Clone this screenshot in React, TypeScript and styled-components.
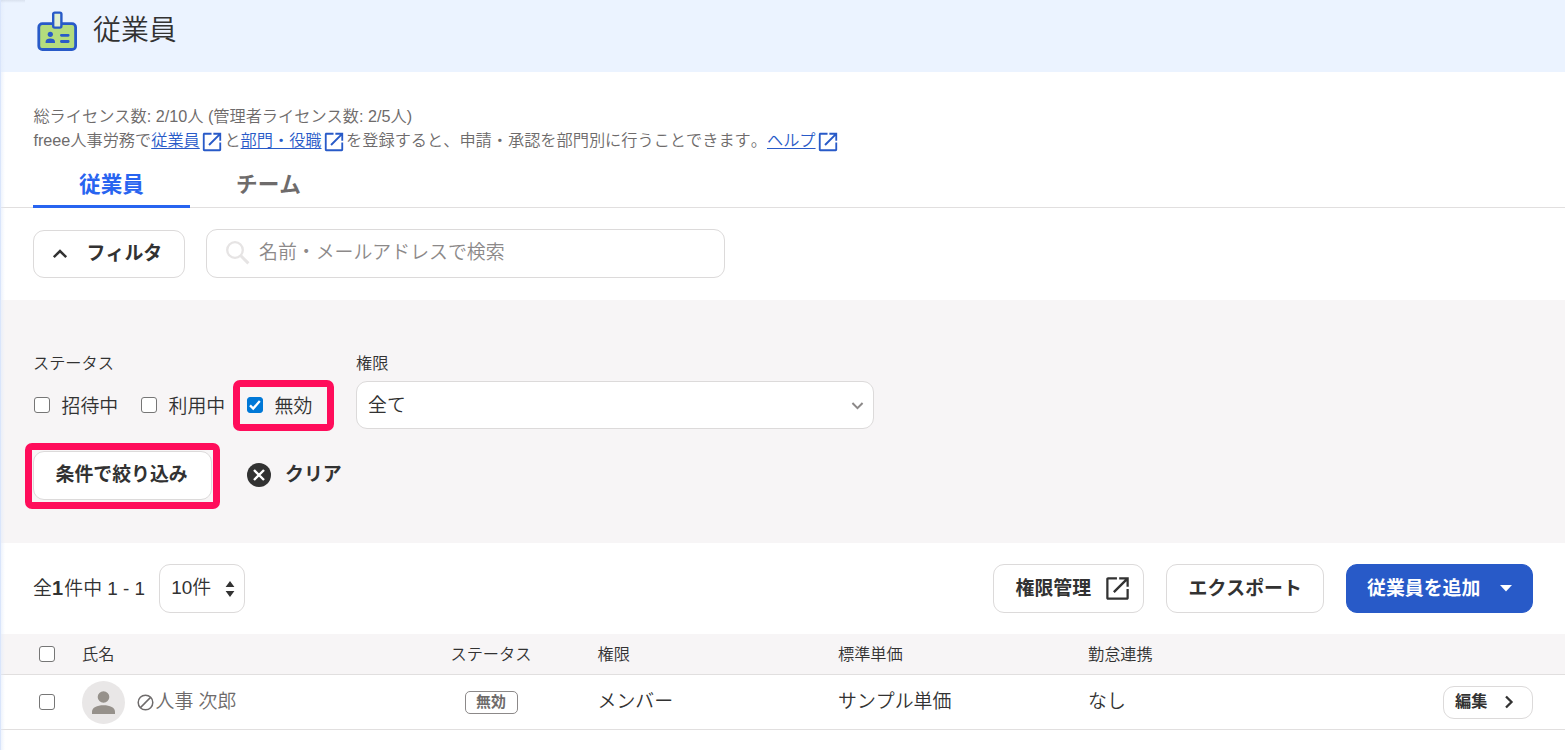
import React from "react";
import styled, { createGlobalStyle, css } from "styled-components";

const ink = "#323232";
const muted = "#6e6b6b";
const line = "#e1dfdf";
const blue = "#285ac8";

const GlobalStyle = createGlobalStyle`
  *, *::before, *::after { box-sizing: border-box; }
  body {
    margin: 0;
    background: #fff;
    color: ${ink};
    font-family: "Liberation Sans", "Noto Sans CJK JP", sans-serif;
    font-size: 18.9px;
    font-weight: 350;
    font-kerning: none;
    overflow: hidden;
  }
  button, input { font: inherit; color: inherit; }
`;

const Page = styled.main`
  position: relative;
  width: 1566px;
  height: 750px;
  padding-right: 1px;
  overflow: hidden;
  white-space: nowrap;
`;

const EdgeShade = styled.div`
  position: absolute;
  inset: 0 auto 0 0;
  width: 5px;
  background: linear-gradient(90deg, #d9e5fb 0 1px, rgba(225, 234, 250, 0.55) 1px, rgba(255, 255, 255, 0));
`;

const CornerShade = styled.div`
  position: absolute;
  left: 1px;
  top: 0;
  width: 24px;
  height: 3px;
  background: linear-gradient(180deg, rgba(90, 100, 120, 0.12), rgba(90, 100, 120, 0));
`;

const Header = styled.header`
  display: flex;
  align-items: center;
  gap: 15px;
  height: 72px;
  padding: 0 0 10px 36px;
  background: #ebf3ff;
`;

const Title = styled.h1`
  margin: 0;
  font-size: 27.9px;
  line-height: 40px;
  font-weight: 350;
`;

const Info = styled.section`
  padding: 32px 33.4px 0;
  height: 89px;
  font-size: 16.2px;
  line-height: 24.3px;
  color: ${muted};
`;

const InfoLine = styled.div`
  display: flex;
  align-items: center;
  height: 24.3px;
`;

const Link = styled.a`
  display: inline-flex;
  align-items: center;
  color: ${blue};
  margin-right: 1.6px;
  span { text-decoration: underline; text-underline-offset: 2px; text-decoration-thickness: 1px; }
  svg { margin: 3px 0 0 1px; }
`;

const Tabs = styled.nav`
  display: flex;
  height: 47px;
  padding-left: 33px;
  border-bottom: 1px solid ${line};
`;

const Tab = styled.div<{ $active?: boolean }>`
  width: 157px;
  height: 47px;
  line-height: 47px;
  text-align: center;
  font-size: 21.6px;
  font-weight: 700;
  color: ${(p) => (p.$active ? "#2864f0" : muted)};
  border-bottom: ${(p) => (p.$active ? "3px solid #2864f0" : "0")};
`;

const SearchRow = styled.div`
  display: flex;
  gap: 21px;
  height: 92px;
  padding: 21px 33px 0;
`;

const Button = styled.button<{ $w: number; $primary?: boolean; $small?: boolean }>`
  display: flex;
  align-items: center;
  width: ${(p) => p.$w}px;
  height: 49px;
  padding: 0 0 0 21.5px;
  border: 1px solid #dcdada;
  border-radius: 11px;
  background: #fff;
  font-weight: 700;
  line-height: 28px;
  ${(p) => p.$primary && css`background: ${blue}; border-color: ${blue}; color: #fff; padding-left: 20px;`}
  ${(p) => p.$small && css`height: 33px; font-size: 16.2px; padding-left: 11px;`}
`;

const Caption = styled.span<{ $gap?: number; $lift?: number }>`
  margin-left: ${(p) => p.$gap ?? 0}px;
  padding-bottom: ${(p) => p.$lift ?? 0}px;
`;

const Glyph = styled.span<{ $gap: number }>`
  display: flex;
  margin-left: ${(p) => p.$gap}px;
`;

const FilterButton = styled(Button)`
  height: 48px;
  margin-top: 1px;
  padding-left: 18px;
`;

const Field = styled.div<{ $w: number; $h?: number }>`
  display: flex;
  align-items: center;
  width: ${(p) => p.$w}px;
  height: ${(p) => p.$h ?? 49}px;
  border: 1px solid #dcdada;
  border-radius: 11px;
  background: #fff;
`;

const SearchField = styled(Field)`
  padding: 0 0 1px 19px;
  color: #8c8989;
`;

const SelectField = styled(Field)`
  justify-content: space-between;
  padding: 0 8px 0 11px;
`;

const FilterPanel = styled.section`
  height: 243px;
  padding: 51px 33px 0;
  background: #f7f5f6;
`;

const FilterFields = styled.div`
  display: flex;
  height: 100px;
`;

const Group = styled.div<{ $w: number }>`
  width: ${(p) => p.$w}px;
`;

const Label = styled.div`
  height: 30px;
  font-size: 16.2px;
  line-height: 24px;
`;

const Options = styled.div`
  display: flex;
  height: 48px;
  align-items: center;
`;

const Option = styled.label<{ $w: number }>`
  position: relative;
  display: flex;
  align-items: center;
  gap: 11.5px;
  width: ${(p) => p.$w}px;
  height: 32px;
  span { padding-top: 4px; line-height: 28px; }
`;

const Box = styled.input.attrs({ type: "checkbox", readOnly: true })`
  appearance: none;
  flex: none;
  width: 16px;
  height: 16px;
  margin: 0 0 0 1px;
  border: 1.4px solid #767676;
  border-radius: 3px;
  background: #fff;
  &:checked { background: #0078d7; border-color: #0078d7; }
`;

const Tick = styled.svg`
  position: absolute;
  left: 1px;
  top: 8px;
`;

const Highlight = styled.div<{ $inset: string }>`
  position: absolute;
  inset: ${(p) => p.$inset};
  border: 7px solid #ff0d5b;
  border-radius: 7px;
  pointer-events: none;
`;

const Actions = styled.div`
  display: flex;
  align-items: center;
  gap: 35px;
`;

const Marked = styled.div`
  position: relative;
`;

const ClearButton = styled.button`
  display: flex;
  align-items: center;
  gap: 14px;
  height: 28px;
  margin-bottom: 2px;
  padding: 0;
  border: 0;
  background: none;
  font-weight: 700;
`;

const Toolbar = styled.div`
  display: flex;
  align-items: center;
  height: 91px;
  padding: 0 32px 0 33px;
  gap: 22px;
`;

const Count = styled.div`
  display: flex;
  align-items: center;
  gap: 14px;
  margin-right: auto;
  line-height: 28px;
  b { display: inline-block; width: 12.4px; font-size: 20px; }
`;

const PageSize = styled(Field)`
  justify-content: space-between;
  padding: 0 9px 0 11px;
`;

const Row = styled.div<{ $head?: boolean }>`
  display: grid;
  grid-template-columns: 44px 368.5px 147px 240.5px 250px 1fr auto;
  align-items: center;
  height: ${(p) => (p.$head ? 41 : 55)}px;
  padding: 0 32px 0 38px;
  border-bottom: 1px solid ${line};
  background: ${(p) => (p.$head ? "#f7f5f6" : "#fff")};
  font-size: ${(p) => (p.$head ? 16.2 : 18.9)}px;
`;

const Cell = styled.div<{ $lift?: number }>`
  padding-bottom: ${(p) => p.$lift ?? 0}px;
  line-height: 28px;
`;

const Person = styled.div`
  display: flex;
  align-items: center;
  color: ${muted};
  svg:nth-child(2) { margin: 0 1.5px 0 12px; }
`;

const Badge = styled.span`
  display: flex;
  justify-content: center;
  width: 53px;
  height: 23px;
  margin-left: 14px;
  border: 1.4px solid #8c8989;
  border-radius: 5px;
  color: ${muted};
  font-size: 14.9px;
  font-weight: 700;
  line-height: 20px;
`;

const IdCardIcon = () => (
  <svg width="42" height="42" viewBox="0 0 42 42" fill="none">
    <rect x="2.8" y="13.6" width="36.8" height="25.9" rx="3.6" fill="#b4dc7d" stroke={blue} strokeWidth="2.8" />
    <rect x="17.2" y="2.6" width="8.2" height="15" rx="1.5" fill="#e1f0d2" stroke={blue} strokeWidth="2.4" />
    <circle cx="14.3" cy="24.3" r="2.6" fill={blue} />
    <path d="M9.6 33v-1.2c0-2 2-3.2 4.7-3.2s4.7 1.2 4.7 3.2V33z" fill={blue} />
    <path d="M25.4 25.3h6.8M25.4 31.5h6.8" stroke={blue} strokeWidth="2.8" strokeLinecap="round" />
  </svg>
);

const External = ({ size = 22, color = blue }: { size?: number; color?: string }) => (
  <svg width={size} height={size} viewBox="0 0 24 24" fill={color}>
    <path d="M20 20H4V4h7.5V2H3.6C2.7 2 2 2.7 2 3.6v16.8c0 .9.7 1.6 1.6 1.6h16.8c.9 0 1.6-.7 1.6-1.6V12.5h-2zM13.5 2v2h5L8 14.5 9.5 16 20 5.5v5h2V2z" />
  </svg>
);

const Chevron = ({ d, w = 16, color = ink, thick = 2.5 }: { d: string; w?: number; color?: string; thick?: number }) => (
  <svg width={w} height={w} viewBox="0 0 16 16" fill="none" stroke={color} strokeWidth={thick}>
    <path d={d} />
  </svg>
);

export default function App() {
  return (
    <>
      <GlobalStyle />
      <Page>
        <Header>
          <IdCardIcon />
          <Title>従業員</Title>
        </Header>

        <Info>
          <InfoLine>総ライセンス数: 2/10人 (管理者ライセンス数: 2/5人)</InfoLine>
          <InfoLine>
            freee人事労務で
            <Link><span>従業員</span><External /></Link>と
            <Link><span>部門・役職</span><External /></Link>
            を登録すると、申請・承認を部門別に行うことできます。
            <Link><span>ヘルプ</span><External /></Link>
          </InfoLine>
        </Info>

        <Tabs>
          <Tab $active>従業員</Tab>
          <Tab>チーム</Tab>
        </Tabs>

        <SearchRow>
          <FilterButton $w={152}>
            <Chevron d="M1.8 11.2 8 5l6.2 6.2" />
            <Caption $gap={18.6} $lift={1}>フィルタ</Caption>
          </FilterButton>
          <SearchField $w={519}>
            <svg width="24" height="24" viewBox="0 0 24 24" fill="none" stroke="#e6e4e4">
              <circle cx="9" cy="9" r="7.8" strokeWidth="2.3" />
              <path d="m14.8 14.8 7.6 7.6" strokeWidth="3" />
            </svg>
            <Caption $gap={9} $lift={5}>名前・メールアドレスで検索</Caption>
          </SearchField>
        </SearchRow>

        <FilterPanel>
          <FilterFields>
            <Group $w={323}>
              <Label>ステータス</Label>
              <Options>
                <Option $w={107}><Box /><span>招待中</span></Option>
                <Option $w={106}><Box /><span>利用中</span></Option>
                <Option $w={88}>
                  <Box checked /><span>無効</span>
                  <Tick width="16" height="16" viewBox="0 0 16 16" fill="none">
                    <path d="m3 8.4 3.2 3.2L12.8 4" stroke="#fff" strokeWidth="2.3" />
                  </Tick>
                  <Highlight $inset="-9px 0 -10px -13px" />
                </Option>
              </Options>
            </Group>
            <Group $w={518}>
              <Label>権限</Label>
              <SelectField $w={518} $h={48}>
                <Caption $lift={4}>全て</Caption>
                <Chevron d="m2.6 5.4 5.4 5.4 5.4-5.4" w={15} color="#8c8989" thick={2.1} />
              </SelectField>
            </Group>
          </FilterFields>
          <Actions>
            <Marked>
              <Button $w={179}><Caption $lift={2}>条件で絞り込み</Caption></Button>
              <Highlight $inset="-8px -8px -9px -8px" />
            </Marked>
            <ClearButton>
              <svg width="24" height="24" viewBox="0 0 24 24">
                <circle cx="12" cy="12" r="12" fill={ink} />
                <path d="m7 7 10 10M17 7 7 17" stroke="#fff" strokeWidth="2.4" />
              </svg>
              <Caption $lift={4}>クリア</Caption>
            </ClearButton>
          </Actions>
        </FilterPanel>

        <Toolbar>
          <Count>
            <span>全<b>1</b>件中 1 - 1</span>
            <PageSize $w={86}>
              <Caption $lift={2}>10件</Caption>
              <svg width="10" height="16" viewBox="0 0 10 16" fill={ink}>
                <path d="M5 0 9.4 6H.6zM5 16 .6 10h8.8z" />
              </svg>
            </PageSize>
          </Count>
          <Button $w={151}>
            <Caption>権限管理</Caption>
            <Glyph $gap={12.5}><External size={27} color={ink} /></Glyph>
          </Button>
          <Button $w={158}><Caption>エクスポート</Caption></Button>
          <Button $w={187} $primary>
            <Caption>従業員を追加</Caption>
            <Glyph $gap={20}>
              <svg width="12" height="7" viewBox="0 0 12 7" fill="#fff"><path d="M0 0h12L6 6.5z" /></svg>
            </Glyph>
          </Button>
        </Toolbar>

        <Row $head>
          <Box />
          <Cell>氏名</Cell>
          <Cell>ステータス</Cell>
          <Cell>権限</Cell>
          <Cell>標準単価</Cell>
          <Cell>勤怠連携</Cell>
        </Row>
        <Row>
          <Box />
          <Person>
            <svg width="43" height="43" viewBox="0 0 43 43">
              <circle cx="21.5" cy="21.5" r="21.5" fill="#e9e7e7" />
              <circle cx="21.5" cy="16" r="5.8" fill="#96918b" />
              <path d="M10 33v-2.5c0-4 5-6.3 11.5-6.3S33 26.5 33 30.5V33z" fill="#96918b" />
            </svg>
            <svg width="17" height="17" viewBox="0 0 17 17" fill="none" stroke={muted} strokeWidth="1.5">
              <circle cx="8.5" cy="8.5" r="7.3" />
              <path d="M3.4 13.6 13.6 3.4" />
            </svg>
            <Caption $lift={5}>人事 次郎</Caption>
          </Person>
          <Badge>無効</Badge>
          <Cell $lift={1}>メンバー</Cell>
          <Cell $lift={1}>サンプル単価</Cell>
          <Cell $lift={1}>なし</Cell>
          <Button $w={90} $small>
            <Caption $lift={3}>編集</Caption>
            <Glyph $gap={14}><Chevron d="m5 2.5 5.5 5.5-5.500 5.5" thick={2.3} /></Glyph>
          </Button>
        </Row>
        <EdgeShade />
        <CornerShade />
      </Page>
    </>
  );
}
